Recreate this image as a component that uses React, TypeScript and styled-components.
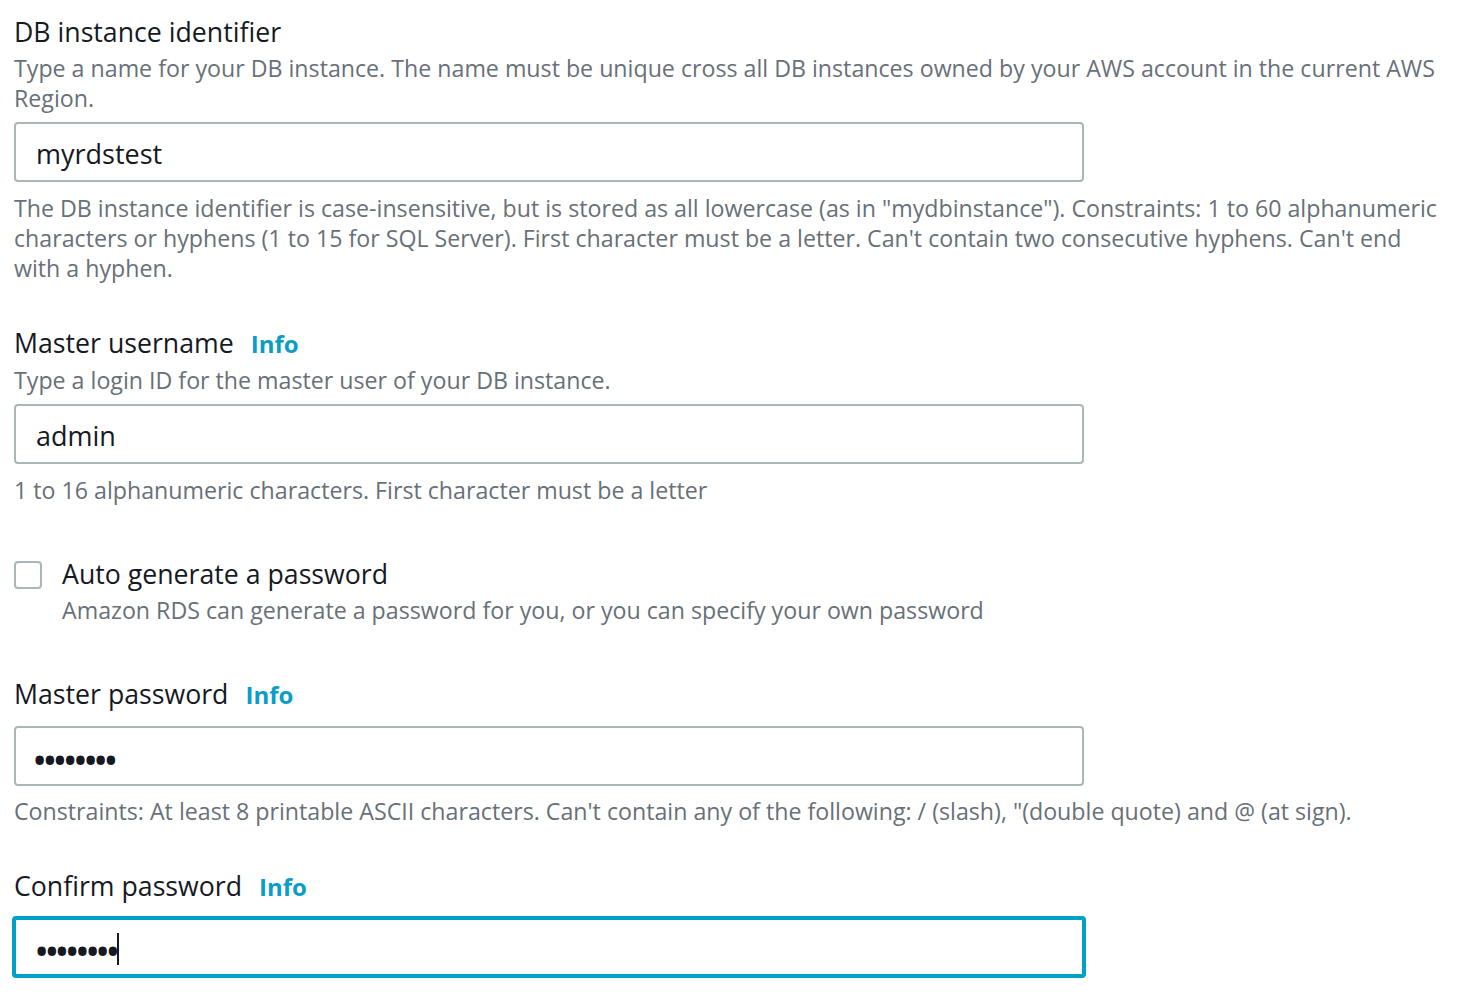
import React from "react";
import styled, { createGlobalStyle } from "styled-components";

const Global = createGlobalStyle`
  html, body { margin: 0; padding: 0; background: #ffffff; }
  body { font-family: "Open Sans", "Noto Sans", Arial, sans-serif; color: #16191f; }
`;

const Page = styled.div`
  padding: 14px 0 0 14px;
  width: 1430px;
  display: flex;
  flex-direction: column;
`;

const Block = styled.div<{ $mt?: number }>`
  display: flex;
  flex-direction: column;
  margin-top: ${(p) => p.$mt ?? 0}px;
`;

const LabelRow = styled.div`
  display: flex;
  align-items: center;
  gap: 17px;
  height: 36px;
`;

const Label = styled.span`
  font-size: 26.7px;
  line-height: 36px;
  color: #16191f;
`;

const Info = styled.a`
  font-size: 24px;
  font-weight: 700;
  color: #0a9dc8;
  text-decoration: none;
  line-height: 36px;
  margin-top: 2px;
`;

const Desc = styled.div<{ $mt?: number }>`
  font-size: 23.2px;
  line-height: 30px;
  color: #687078;
  margin-top: ${(p) => p.$mt ?? 0}px;
`;

const InputBox = styled.div<{ $focused?: boolean; $mt?: number }>`
  box-sizing: border-box;
  width: ${(p) => (p.$focused ? 1074 : 1070)}px;
  height: ${(p) => (p.$focused ? 62 : 60)}px;
  margin-top: ${(p) => p.$mt ?? 0}px;
  margin-left: ${(p) => (p.$focused ? -2 : 0)}px;
  border: ${(p) => (p.$focused ? "4px solid #00a1c9" : "2px solid #aab7b8")};
  border-radius: 4px;
  display: flex;
  align-items: center;
  padding-left: ${(p) => (p.$focused ? 22 : 20)}px;
  padding-top: 2px;
  font-size: 27px;
  color: #16191f;
`;

const Dots = styled.span`
  font-size: 30px;
  font-weight: 700;
  letter-spacing: -1.1px;
  margin-left: -2px;
  margin-top: 5px;
  color: #16191f;
`;

const Caret = styled.span`
  display: inline-block;
  width: 2px;
  height: 32px;
  background: #16191f;
  margin-left: 0px;
  margin-top: 2px;
`;

const CheckRow = styled.div<{ $mt?: number }>`
  display: flex;
  gap: 20px;
  margin-top: ${(p) => p.$mt ?? 0}px;
`;

const Box = styled.span`
  box-sizing: border-box;
  width: 28px;
  height: 28px;
  margin-top: 5px;
  border: 2px solid #aab7b8;
  border-radius: 4px;
  flex: none;
`;

const CheckText = styled.div`
  display: flex;
  flex-direction: column;
`;

export default function App() {
  return (
    <>
      <Global />
      <Page>
        <Block>
          <LabelRow>
            <Label>DB instance identifier</Label>
          </LabelRow>
          <Desc $mt={3}>
            Type a name for your DB instance. The name must be unique cross all DB instances owned by your AWS account in the current AWS Region.
          </Desc>
          <InputBox $mt={9}>myrdstest</InputBox>
          <Desc $mt={11}>
            The DB instance identifier is case-insensitive, but is stored as all lowercase (as in "mydbinstance"). Constraints: 1 to 60 alphanumeric characters or hyphens (1 to 15 for SQL Server). First character must be a letter. Can't contain two consecutive hyphens. Can't end with a hyphen.
          </Desc>
        </Block>

        <Block $mt={42}>
          <LabelRow>
            <Label>Master username</Label>
            <Info href="#">Info</Info>
          </LabelRow>
          <Desc $mt={4}>Type a login ID for the master user of your DB instance.</Desc>
          <InputBox $mt={9}>admin</InputBox>
          <Desc $mt={11}>1 to 16 alphanumeric characters. First character must be a letter</Desc>
        </Block>

        <CheckRow $mt={51}>
          <Box />
          <CheckText>
            <Label>Auto generate a password</Label>
            <Desc $mt={3}>Amazon RDS can generate a password for you, or you can specify your own password</Desc>
          </CheckText>
        </CheckRow>

        <Block $mt={51}>
          <LabelRow>
            <Label>Master password</Label>
            <Info href="#">Info</Info>
          </LabelRow>
          <InputBox $mt={14}>
            <Dots>••••••••</Dots>
          </InputBox>
          <Desc $mt={10}>
            Constraints: At least 8 printable ASCII characters. Can't contain any of the following: / (slash), "(double quote) and @ (at sign).
          </Desc>
        </Block>

        <Block $mt={42}>
          <LabelRow>
            <Label>Confirm password</Label>
            <Info href="#">Info</Info>
          </LabelRow>
          <InputBox $mt={12} $focused>
            <Dots>••••••••</Dots>
            <Caret />
          </InputBox>
        </Block>
      </Page>
    </>
  );
}
